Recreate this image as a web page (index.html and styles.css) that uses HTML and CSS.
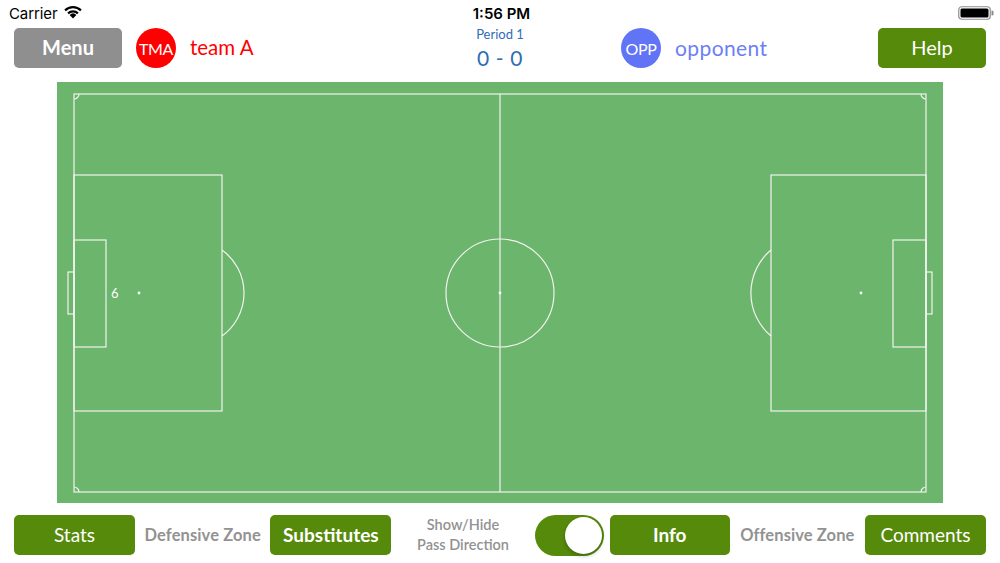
FILE: index.html
```html
<!DOCTYPE html>
<html>
<head>
<meta charset="utf-8">
<link rel="stylesheet" href="styles.css">
</head>
<body>
<div class="screen">
  <div class="status">
    <div class="status-left">
      <span class="carrier">Carrier</span>
      <svg class="wifi" width="20" height="14" viewBox="0 0 20 14">
        <path d="M10 13.5 L6.6 9.9 A5 5 0 0 1 13.4 9.9 Z" fill="#000"/>
        <path d="M4.3 7.6 A8.2 8.2 0 0 1 15.7 7.6 L14.2 9.2 A6.1 6.1 0 0 0 5.8 9.2 Z" fill="#000"/>
        <path d="M1.3 4.6 A12.5 12.5 0 0 1 18.7 4.6 L17.2 6.2 A10.3 10.3 0 0 0 2.8 6.2 Z" fill="#000"/>
      </svg>
    </div>
    <div class="clock">1:56 PM</div>
    <div class="status-right">
      <svg class="battery" width="36" height="14" viewBox="0 0 36 14">
        <rect x="0.75" y="0.75" width="31.5" height="12.5" rx="3" fill="none" stroke="#8e8e8e" stroke-width="1.2"/>
        <rect x="2.5" y="2.5" width="28" height="9" rx="1.5" fill="#000"/>
        <path d="M33.5 4.5 h0.6 a1.5 1.5 0 0 1 1.5 1.5 v2 a1.5 1.5 0 0 1 -1.5 1.5 h-0.6 Z" fill="#8e8e8e"/>
      </svg>
    </div>
  </div>

  <div class="topbar">
    <button class="btn btn-gray btn-bold">Menu</button>
    <div class="team team-a">
      <span class="badge badge-red">TMA</span>
      <span class="team-name red">team A</span>
    </div>
    <div class="score">
      <div class="period">Period 1</div>
      <div class="result">0 - 0</div>
    </div>
    <div class="team team-b">
      <span class="badge badge-blue">OPP</span>
      <span class="team-name blue">opponent</span>
    </div>
    <button class="btn btn-green btn-help">Help</button>
  </div>

  <div class="field-wrap">
    <div class="field">
      <svg width="886" height="421" viewBox="0 0 886 421">
        <g fill="none" stroke="#f2f2ee" stroke-width="1.2">
          <rect x="17" y="12" width="852" height="398"/>
          <line x1="443" y1="12" x2="443" y2="410"/>
          <circle cx="443" cy="211" r="54"/>
          <rect x="17" y="93" width="148" height="236"/>
          <rect x="17" y="158" width="32" height="107"/>
          <rect x="11" y="190" width="6" height="42"/>
          <path d="M165 168 A53 53 0 0 1 165 254"/>
          <rect x="714" y="93" width="155" height="236"/>
          <rect x="836" y="158" width="33" height="107"/>
          <rect x="869" y="190" width="6" height="42"/>
          <path d="M714 168 A56 56 0 0 0 714 254"/>
          <path d="M17 17 A5 5 0 0 0 22 12"/>
          <path d="M864 12 A5 5 0 0 0 869 17"/>
          <path d="M17 405 A5 5 0 0 1 22 410"/>
          <path d="M864 410 A5 5 0 0 1 869 405"/>
        </g>
        <g fill="#ffffff">
          <circle cx="443" cy="211" r="1.4"/>
          <circle cx="82" cy="211" r="1.4"/>
          <circle cx="804" cy="211" r="1.4"/>
        </g>
        <text x="54" y="215.5" class="player-num">6</text>
      </svg>
    </div>
  </div>

  <div class="bottombar">
    <button class="btn btn-green btn-wide">Stats</button>
    <span class="zone">Defensive Zone</span>
    <button class="btn btn-green btn-wide btn-bold">Substitutes</button>
    <span class="toggle-label">Show/Hide<br>Pass Direction</span>
    <span class="switch"><span class="knob"></span></span>
    <button class="btn btn-green btn-info btn-bold">Info</button>
    <span class="zone">Offensive Zone</span>
    <button class="btn btn-green btn-wide">Comments</button>
  </div>
</div>
</body>
</html>
```

FILE: styles.css
```css
* { box-sizing: border-box; }
html, body { margin: 0; padding: 0; background: #ffffff; }
.screen {
  width: 1000px;
  height: 563px;
  display: flex;
  flex-direction: column;
  font-family: "Lato", "Noto Sans", sans-serif;
  overflow: hidden;
}
.status {
  height: 28px;
  display: flex;
  align-items: center;
  justify-content: space-between;
  padding: 0 6px 0 9px;
  font-family: "Inter", "Roboto", sans-serif;
  font-size: 15px;
  color: #000;
}
.status-left { display: flex; align-items: center; gap: 6px; width: 200px; margin-top: -2px; }
.carrier { letter-spacing: -0.1px; }
.wifi { margin-top: -2px; }
.clock {
  font-weight: 600;
  font-size: 15px;
  margin-top: -2px;
}
.status-right { width: 200px; display: flex; justify-content: flex-end; margin-top: -2px; }

.topbar {
  height: 40px;
  display: flex;
  align-items: center;
  padding: 0 14px;
}
.btn {
  border: none;
  border-radius: 5px;
  color: #ffffff;
  font-family: "Lato", "Noto Sans", sans-serif;
  font-size: 19px;
  height: 40px;
  padding: 0 0 2px 0;
  display: flex;
  align-items: center;
  justify-content: center;
  flex: none;
}
.btn-bold { font-weight: 700; }
.btn-gray { background: #8f8f8f; width: 108px; font-size: 20px; }
.btn-green { background: #568a0b; }
.btn-help { width: 108px; margin-left: auto; font-size: 20px; }
.team { display: flex; align-items: center; }
.team-a { margin-left: 14px; width: 299px; }
.badge {
  width: 40px;
  height: 40px;
  border-radius: 50%;
  display: flex;
  align-items: center;
  justify-content: center;
  color: #fff;
  font-size: 16px;
  letter-spacing: -0.3px;
  flex: none;
}
.badge-red { background: #ff0000; }
.badge-blue { background: #6174f6; }
.team-name { font-size: 20.5px; margin-left: 14px; padding-bottom: 2px; }
.red { color: #ff0000; }
.blue { color: #6d7ff5; letter-spacing: 0.4px; font-size: 21px; }
.score {
  width: 130px;
  text-align: center;
  color: #2f6db5;
}
.period { font-size: 13px; line-height: 16px; }
.result { font-size: 21px; line-height: 26px; margin-top: 3px; letter-spacing: 0.6px; }
.team-b { margin-left: 56px; }

.field-wrap {
  margin-top: 14px;
  display: flex;
  justify-content: center;
}
.field {
  width: 886px;
  height: 421px;
  background: #6bb56d;
}
.field svg { display: block; }
.player-num { fill: #ffffff; font-family: "Lato", sans-serif; font-size: 13px; }

.bottombar {
  margin-top: 12px;
  height: 40px;
  display: flex;
  align-items: center;
  padding: 0 14px;
}
.btn-wide { width: 121px; }
.btn-info { width: 120px; }
.zone {
  color: #929292;
  font-size: 16.5px;
  font-weight: 700;
  width: 136px;
  text-align: center;
  letter-spacing: 0.1px;
}
.toggle-label {
  color: #929292;
  font-size: 14.5px;
  font-weight: 600;
  text-align: center;
  width: 144px;
  line-height: 20px;
}
.switch {
  width: 69px;
  height: 41px;
  border-radius: 21px;
  background: #568a0b;
  position: relative;
  display: block;
  flex: none;
  margin-right: 6px;
}
.knob {
  position: absolute;
  right: 2px;
  top: 2px;
  width: 37px;
  height: 37px;
  border-radius: 50%;
  background: #fff;
  box-shadow: 0 2px 4px rgba(0,0,0,0.25);
}
```
